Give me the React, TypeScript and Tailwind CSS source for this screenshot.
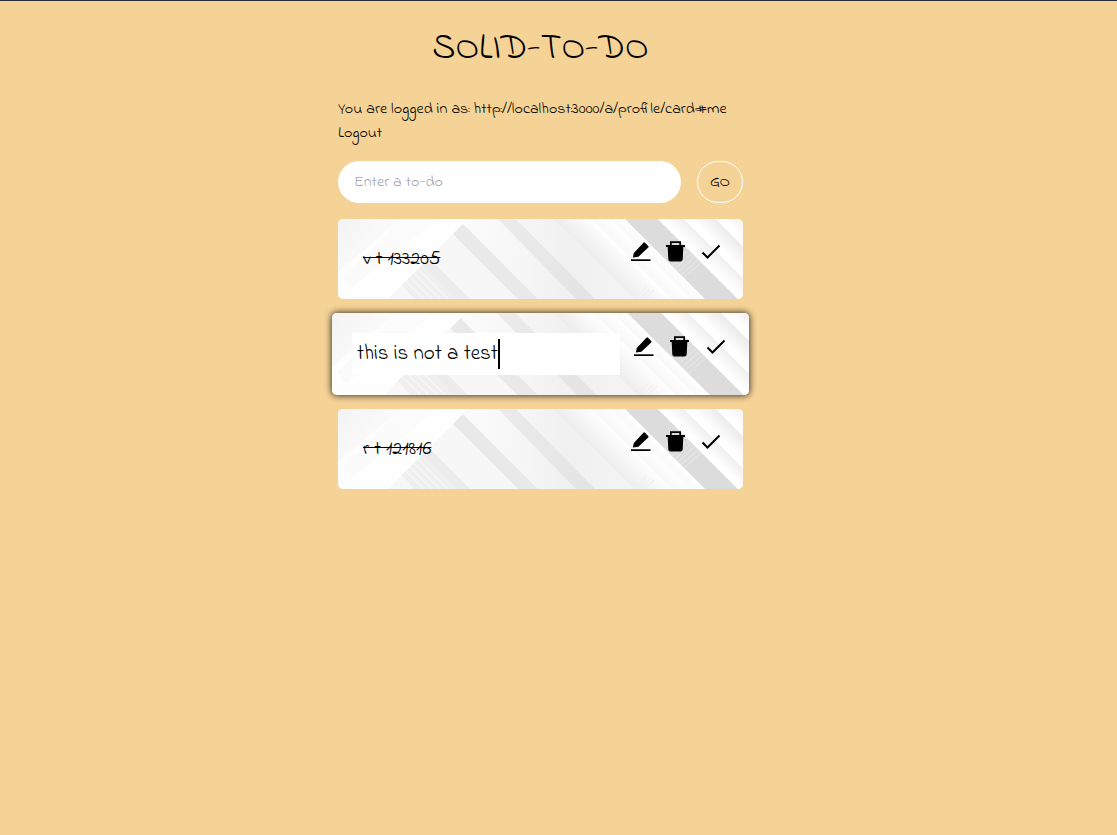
import { useState } from 'react';

function CardArt({ id }: { id: string }) {
  return (
    <svg aria-hidden="true" viewBox="0 0 405 80" preserveAspectRatio="none" className="absolute inset-0 h-full w-full">
      <defs>
        <linearGradient id={id + 'corner'} x1="0" y1="0" x2="50" y2="40" gradientUnits="userSpaceOnUse">
          <stop offset="0" stopColor="#f3f3f3" />
          <stop offset="1" stopColor="#fdfdfd" />
        </linearGradient>
        <linearGradient id={id + 'band'} x1="10" y1="70" x2="90" y2="0" gradientUnits="userSpaceOnUse">
          <stop offset="0" stopColor="#fafafa" />
          <stop offset="1" stopColor="#fcfcfc" />
        </linearGradient>
        <linearGradient id={id + 'mid'} x1="125" y1="0" x2="300" y2="0" gradientUnits="userSpaceOnUse">
          <stop offset="0" stopColor="#fbfbfb" />
          <stop offset="0.3" stopColor="#f7f7f8" />
          <stop offset="0.6" stopColor="#f0f0f1" />
          <stop offset="1" stopColor="#f4f4f4" />
        </linearGradient>
        <linearGradient id={id + 'stripe'} x1="160" y1="0" x2="250" y2="80" gradientUnits="userSpaceOnUse">
          <stop offset="0" stopColor="#ebebeb" />
          <stop offset="1" stopColor="#e4e4e5" />
        </linearGradient>
        <linearGradient id={id + 'fade'} x1="216" y1="0" x2="236" y2="-20" gradientUnits="userSpaceOnUse">
          <stop offset="0" stopColor="#ededee" />
          <stop offset="1" stopColor="#ffffff" />
        </linearGradient>
        <linearGradient id={id + 'rib'} x1="254" y1="0" x2="264" y2="-10" gradientUnits="userSpaceOnUse">
          <stop offset="0" stopColor="#f8f8f8" />
          <stop offset="1" stopColor="#ffffff" />
        </linearGradient>
        <linearGradient id={id + 'rib2'} x1="273" y1="0" x2="280" y2="-7" gradientUnits="userSpaceOnUse">
          <stop offset="0" stopColor="#f9f9f9" />
          <stop offset="1" stopColor="#ffffff" />
        </linearGradient>
        <linearGradient id={id + 'r1'} x1="320" y1="0" x2="333" y2="-13" gradientUnits="userSpaceOnUse">
          <stop offset="0.2" stopColor="#ffffff" />
          <stop offset="1" stopColor="#efefef" />
        </linearGradient>
        <linearGradient id={id + 'r2'} x1="346" y1="0" x2="362" y2="-16" gradientUnits="userSpaceOnUse">
          <stop offset="0.2" stopColor="#ffffff" />
          <stop offset="1" stopColor="#ebebeb" />
        </linearGradient>
        <linearGradient id={id + 'r3'} x1="378" y1="0" x2="394" y2="-16" gradientUnits="userSpaceOnUse">
          <stop offset="0.2" stopColor="#ffffff" />
          <stop offset="1" stopColor="#eeeeee" />
        </linearGradient>
      </defs>
      <rect width="405" height="80" fill="#fefefe" />
      <path d="M0 0H63L0 53Z" fill={`url(#${id}corner)`} />
      <path d="M63 0H100L14 68L5 58Z" fill={`url(#${id}band)`} />
      <path d="M130 0H300V80H200L125 5Z" fill={`url(#${id}mid)`} />
      <path d="M125 5L200 80H50Z" fill="#f7f7f7" />
      <path d="M84 46L118 80H76L64 66Z" fill="#efefef" />
      <path
        d="M80 50L110 80M76 54L102 80M72 58L94 80M68 62L86 80"
        fill="none"
        stroke="#f8f8f8"
        strokeWidth="1.2"
      />
      <path d="M84 46L91 39L132 80H118Z" fill="#ececec" />
      <path d="M115 15L125 5L200 80H180Z" fill="#e9e9e9" />
      <path d="M160 0H178L257 80H238Z" fill={`url(#${id}stripe)`} />
      <path d="M216 0H287L367 80H297Z" fill={`url(#${id}fade)`} />
      <path d="M254 0H287L367 80H334Z" fill={`url(#${id}rib)`} />
      <path d="M273 0H287L367 80H353Z" fill={`url(#${id}rib2)`} />
      <path
        d="M297 79L309 67M302 80L312 70M307 80L316 71"
        fill="none"
        stroke="#f0f0f0"
        strokeWidth="1.2"
      />
      <path d="M287 0H320L400 80H367Z" fill="#dcdcdc" />
      <path
        d="M334 47L349 32M337 50L353 35M340 53L356 38M343 56L360 41M346 59L363 44"
        fill="none"
        stroke="#e5e5e5"
        strokeWidth="1.2"
      />
      <path d="M320 0H346L405 59V80H400Z" fill={`url(#${id}r1)`} />
      <path d="M346 0H378L405 27V59Z" fill={`url(#${id}r2)`} />
      <path d="M378 0H405V27Z" fill={`url(#${id}r3)`} />
    </svg>
  );
}

function PenIcon() {
  return (
    <svg aria-hidden="true" viewBox="0 0 24 24" className="size-6">
      <path d="M4.800 13L14.400 2.700q.8-.8 1.600 0l3.200 3.200q.8.8 0 1.600L9.400 16.800L3.900 17.600Z" />
      <path d="M2 19.300h19.500v1.700H2Z" />
    </svg>
  );
}

function TrashIcon() {
  return (
    <svg aria-hidden="true" viewBox="0 0 24 24" className="size-6">
      <path d="M6 1.300h11v3.700h4v2h-1.700L18.700 19.600q-.1 1.800-2 1.800H6.300Q4.400 21.400 4.300 19.600L3.700 7H2V5h4ZM7.700 2.900V5h7.600V2.900Z" fillRule="evenodd" />
    </svg>
  );
}

function CheckIcon() {
  return (
    <svg aria-hidden="true" viewBox="0 0 24 24" className="size-6">
      <path d="M3.500 12.500L8.500 17.500L20.500 5.500" fill="none" stroke="currentColor" strokeWidth="2" />
    </svg>
  );
}

function Actions({ className }: { className: string }) {
  return (
    <div className={className}>
      <button type="button" aria-label="Edit"><PenIcon /></button>
      <button type="button" aria-label="Delete"><TrashIcon /></button>
      <button type="button" aria-label="Complete"><CheckIcon /></button>
    </div>
  );
}

function DoneItem({ id, text }: { id: string; text: string }) {
  return (
    <li className="relative flex h-20 items-start justify-between overflow-hidden rounded-[5px] pt-[21px] pr-5 pl-[25px]">
      <CardArt id={id} />
      <span className="relative pt-1 text-[20px] leading-8 line-through decoration-1">{text}</span>
      <Actions className="relative flex shrink-0 gap-[11px]" />
    </li>
  );
}

function EditingItem() {
  const [value, setValue] = useState('this is not a test');
  return (
    <li className="relative -mx-1.5 flex h-[82px] items-start justify-between rounded-[5px] pt-5 pr-[21px] pl-5 shadow-[0_0_6px_1px_rgba(0,0,0,0.7)]">
      <div className="absolute inset-0 overflow-hidden rounded-[5px]"><CardArt id="b" /></div>
      <div className="relative">
        <input
          aria-label="Edit to-do"
          value={value}
          onChange={(e) => setValue(e.target.value)}
          className="h-[42px] w-[268px] bg-white px-[5px] text-[21px] outline-none"
        />
        <span aria-hidden="true" className="absolute top-1.5 left-[146px] h-[30px] w-0.5 bg-black" />
      </div>
      <Actions className="relative flex shrink-0 gap-3 pt-0.5" />
    </li>
  );
}

export default function App() {
  return (
    <div className='min-h-screen border-t border-[#2b2f3a] bg-[#f5d296] pr-9 font-["Indie_Flower","Open_Sans",sans-serif] text-black'>
      <main className="mx-auto w-full max-w-[405px] pt-[25px]">
        <h1 className="text-center text-[36px] leading-12">SOLID-TO-DO</h1>
        <div className="mt-[23px] text-[16px] leading-6">
          <p>You are logged in as: http://localhost:3000/a/profile/card#me</p>
          <button type="button" className="block">Logout</button>
        </div>
        <form className="mt-4 flex gap-4" onSubmit={(e) => e.preventDefault()}>
          <input
            aria-label="Enter a to-do"
            placeholder="Enter a to-do"
            className="h-[42px] min-w-0 flex-1 rounded-full bg-white px-4 outline-none placeholder:text-[#a1a5b3]"
          />
          <button className="h-[42px] w-[46px] rounded-full border border-white text-[16px]">GO</button>
        </form>
        <ul className="mt-4 flex flex-col gap-3.5">
          <DoneItem id="a" text="v t 133205" />
          <EditingItem />
          <DoneItem id="c" text="r t 121816" />
        </ul>
      </main>
    </div>
  );
}
